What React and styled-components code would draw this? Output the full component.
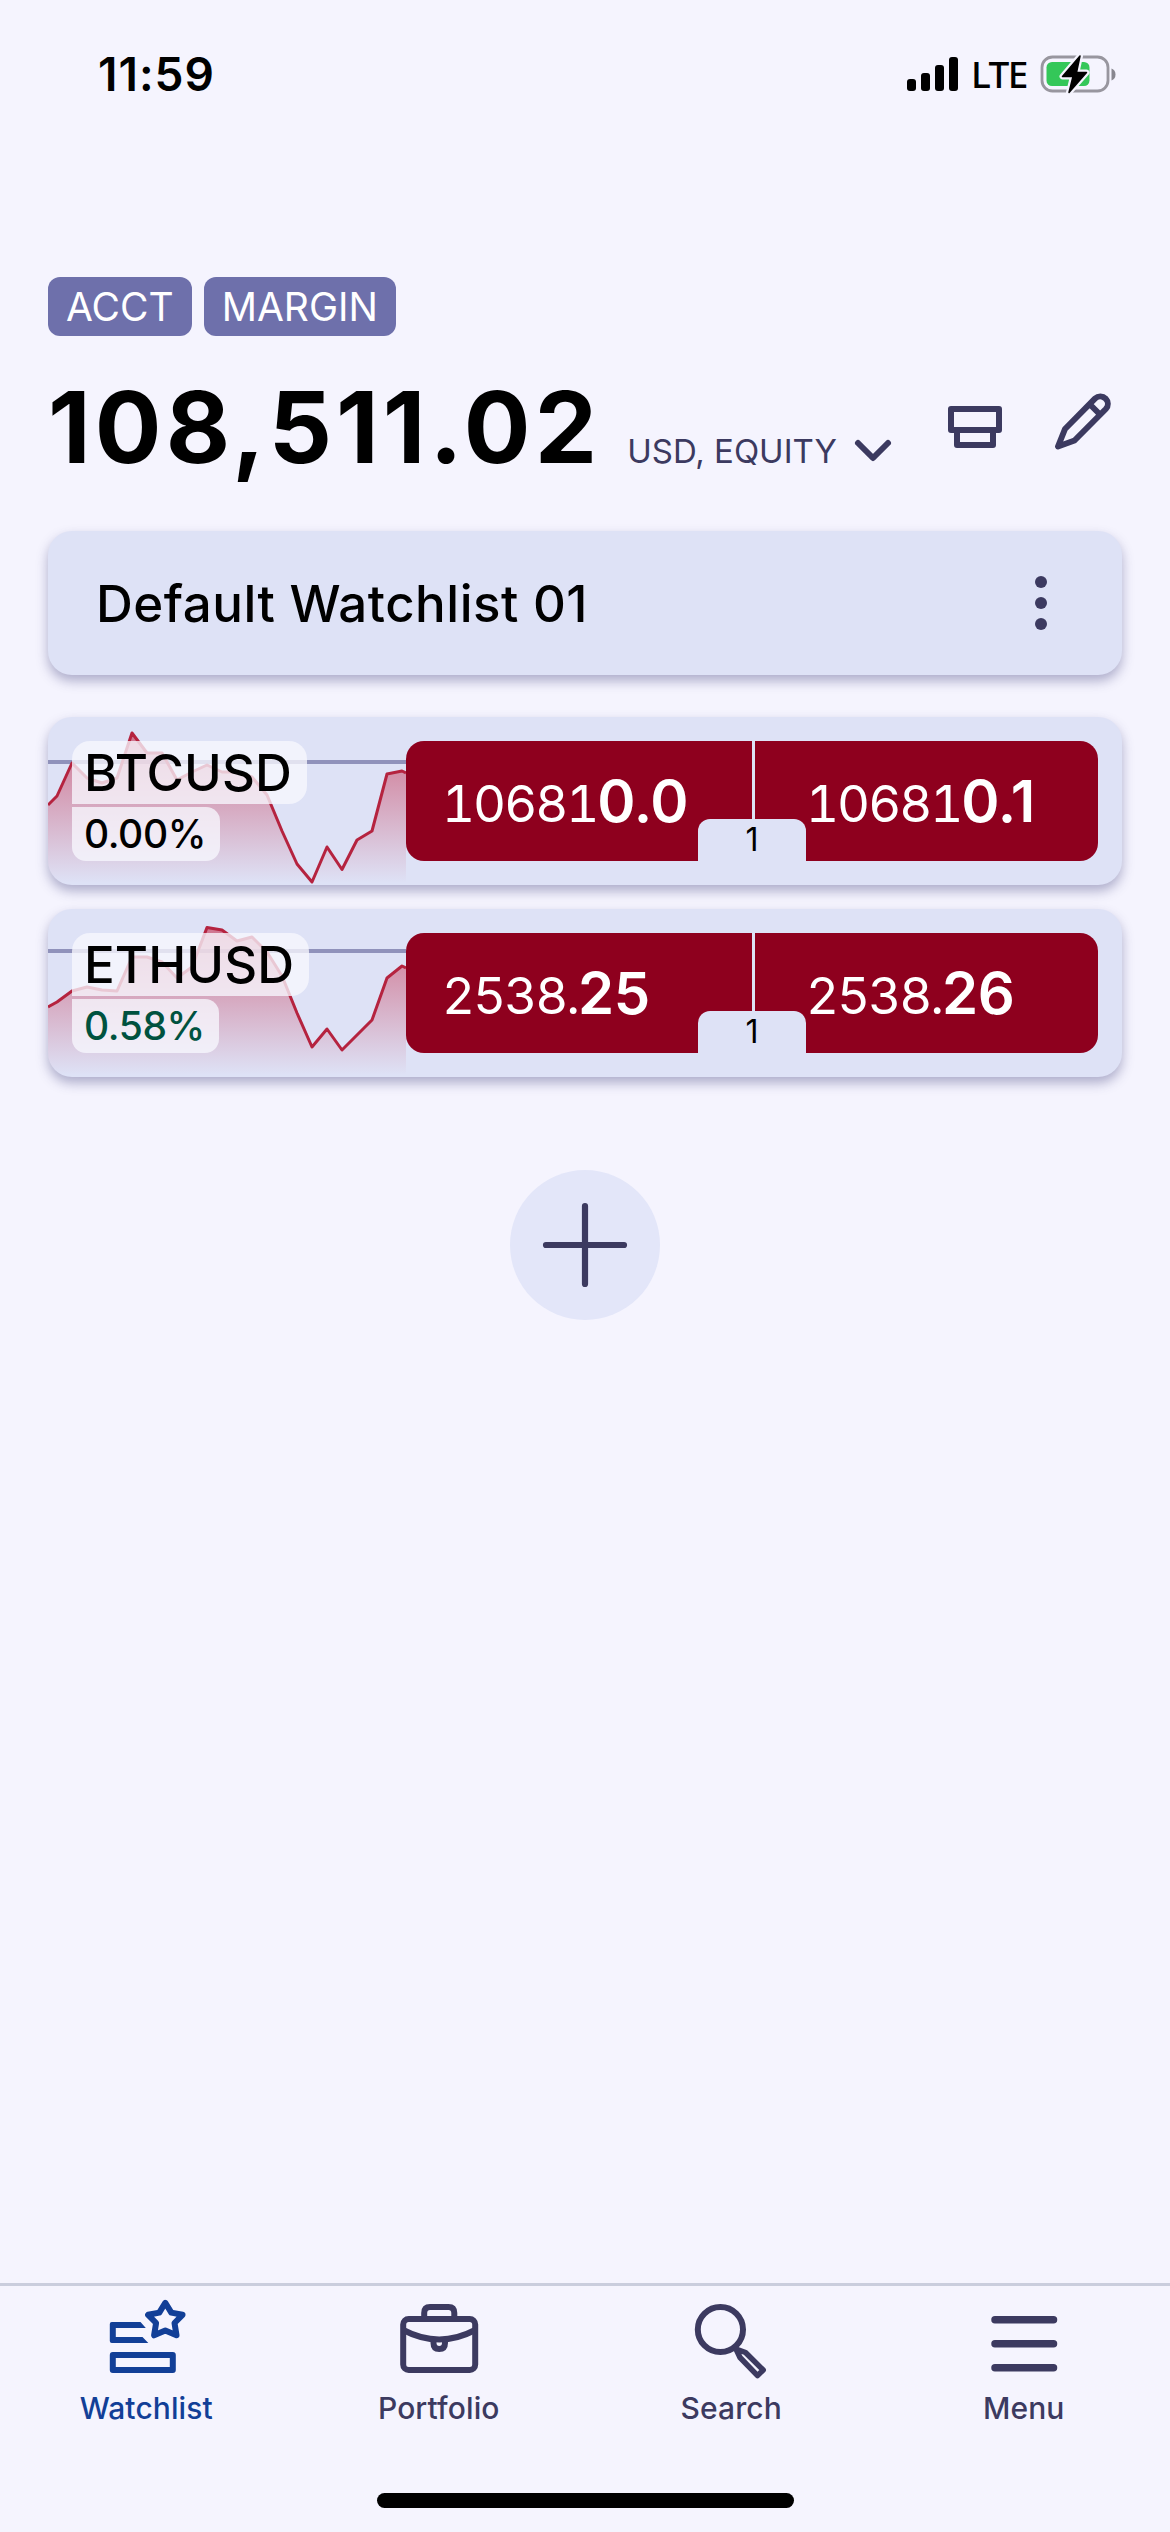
import React from "react";
import styled, { createGlobalStyle } from "styled-components";

const GlobalStyle = createGlobalStyle`
  * {
    box-sizing: border-box;
  }

  body {
    margin: 0;
    background-color: #f5f4fe;
    font-family: Inter, "Liberation Sans", sans-serif;
    color: #000;
  }
`;

const Screen = styled.div`
  display: flex;
  flex-direction: column;
  width: 1170px;
  height: 2532px;
  overflow: hidden;
`;

const StatusBar = styled.header`
  display: flex;
  align-items: center;
  justify-content: space-between;
  height: 148px;
  padding: 0 52px 0 98px;
`;

const Time = styled.span`
  font-size: 46px;
  font-weight: 600;
  letter-spacing: 1px;
  line-height: 60px;
`;

const StatusIcons = styled.div`
  display: flex;
  align-items: center;
`;

const Network = styled.span`
  width: 82px;
  font-family: "Noto Sans", "Open Sans", sans-serif;
  font-size: 37px;
  font-weight: 500;
  letter-spacing: -1.5px;
  line-height: 40px;
  text-align: center;
`;

const Content = styled.main`
  flex: 1;
  display: flex;
  flex-direction: column;
  padding: 129px 48px 0;
`;

const Tags = styled.div`
  display: flex;
  gap: 12px;
`;

const Tag = styled.span`
  height: 59px;
  padding: 0 18px;
  border-radius: 12px;
  background-color: #6e70ab;
  color: #fff;
  font-size: 39px;
  line-height: 59px;
`;

const AccountRow = styled.div`
  display: flex;
  align-items: center;
  justify-content: space-between;
  height: 120px;
  margin-top: 31px;
  padding-right: 3px;
`;

const Balance = styled.div`
  display: flex;
  align-items: baseline;
`;

const Amount = styled.span`
  font-size: 99px;
  font-weight: 700;
  letter-spacing: 4.1px;
  line-height: 120px;
`;

const Currency = styled.button`
  display: flex;
  align-items: center;
  gap: 16px;
  margin-left: 26px;
  padding: 0;
  border: none;
  background: none;
  color: #3c3a60;
  font-family: inherit;
  font-size: 33px;
  line-height: 40px;
`;

const Actions = styled.div`
  display: flex;
  gap: 36px;
`;

const Card = styled.section`
  display: flex;
  border-radius: 24px;
  background-color: #dee2f6;
  box-shadow: 0 6px 12px rgba(59, 57, 120, 0.38);
`;

const WatchlistHeader = styled(Card)`
  align-items: center;
  justify-content: space-between;
  height: 144px;
  margin-top: 44px;
  padding: 0 75px 0 48px;
`;

const WatchlistTitle = styled.h1`
  margin: 0;
  padding-top: 2px;
  font-size: 51px;
  font-weight: 500;
  letter-spacing: 0.5px;
  line-height: 60px;
`;

const Rows = styled.div`
  display: flex;
  flex-direction: column;
  gap: 24px;
  margin-top: 42px;
`;

const InstrumentCard = styled(Card)`
  position: relative;
  justify-content: space-between;
  height: 168px;
  padding: 24px;
  overflow: hidden;
`;

/* sits behind the symbol and change labels */
const Chart = styled.svg`
  position: absolute;
  top: 0;
  left: 0;
`;

const Labels = styled.div`
  position: relative;
  display: flex;
  flex-direction: column;
  align-items: flex-start;
  gap: 3px;
`;

const Label = styled.span`
  background-color: rgba(247, 247, 254, 0.78);
`;

const SymbolName = styled(Label)`
  height: 63px;
  padding: 0 15px 0 12px;
  border-radius: 18px 18px 18px 0;
  font-size: 51px;
  font-weight: 500;
  letter-spacing: 0.1px;
  line-height: 63px;
`;

const Change = styled(Label)`
  height: 54px;
  padding: 0 14px 0 12px;
  border-radius: 0 14px 14px 14px;
  color: ${(props) => (props.$up ? "#00523f" : "#000")};
  font-size: 39px;
  font-weight: 500;
  letter-spacing: -0.4px;
  line-height: 54px;
`;

const Quotes = styled.div`
  position: relative;
  display: grid;
  grid-template-columns: 346px 343px;
  gap: 3px;
  height: 120px;
  border-radius: 18px;
  overflow: hidden;
`;

const Price = styled.button`
  padding: 0 0 0 ${(props) => props.$indent}px;
  border: none;
  background-color: #8e001e;
  color: #fff;
  font-family: inherit;
  font-size: 51px;
  font-weight: 400;
  font-variant-numeric: tabular-nums;
  letter-spacing: -2px;
  line-height: 120px;
  text-align: left;
  white-space: nowrap;
`;

const Pips = styled.span`
  font-size: 58px;
  font-weight: 600;
  font-variant-numeric: normal;
  letter-spacing: -0.3px;
`;

const Spread = styled.span`
  position: absolute;
  left: 292px;
  bottom: 0;
  width: 108px;
  height: 42px;
  border-radius: 12px 12px 0 0;
  background-color: #dee2f6;
  font-size: 32px;
  line-height: 42px;
  text-align: center;
`;

const AddButton = styled.button`
  display: flex;
  align-items: center;
  justify-content: center;
  align-self: center;
  width: 150px;
  height: 150px;
  margin-top: 93px;
  padding: 0;
  border: none;
  border-radius: 50%;
  background-color: #e3e6f9;
`;

const TabBar = styled.nav`
  display: grid;
  grid-template-columns: repeat(4, 1fr);
  height: 210px;
  padding-top: 10px;
  border-top: 3px solid #cacddd;
`;

const Tab = styled.a`
  display: flex;
  flex-direction: column;
  align-items: center;
  gap: 10px;
  color: ${(props) => (props.$active ? "#123f97" : "#3c3a60")};
  font-size: 30px;
  font-weight: 500;
  letter-spacing: 0.1px;
  line-height: 36px;
`;

const HomeIndicator = styled.div`
  flex-shrink: 0;
  width: 417px;
  height: 15px;
  margin: 0 auto 24px;
  border-radius: 8px;
  background-color: #000;
`;

const SignalIcon = () => (
  <svg width="51" height="34" viewBox="0 0 51 34">
    <rect x="0" y="22" width="9" height="12" rx="3" />
    <rect x="14" y="16" width="9" height="18" rx="3" />
    <rect x="28" y="8" width="9" height="26" rx="3" />
    <rect x="42" y="0" width="9" height="34" rx="3" />
  </svg>
);

const BatteryIcon = () => (
  <svg width="78" height="40" viewBox="0 0 78 40">
    <rect x="2" y="3" width="66" height="34" rx="10.5" fill="none" stroke="#98969f" strokeWidth="2.8" />
    <rect x="6.5" y="8" width="43" height="24" rx="5.5" fill="#34c759" />
    <path d="M71.500 14.500q4 1.500 4 6t-4 6z" fill="#88868f" />
    <path
      d="M40 2L22.500 22.500H33L29 38.500L46.500 18.500H36.500z"
      stroke="#f5f4fe"
      strokeWidth="6"
      strokeLinejoin="round"
    />
    <path d="M40 2L22.500 22.500H33L29 38.500L46.500 18.500H36.500z" stroke="#000" strokeWidth="1.5" strokeLinejoin="round" />
  </svg>
);

const ChevronIcon = () => (
  <svg width="40" height="26" viewBox="0 0 40 26" fill="none" stroke="#3c3a60" strokeWidth="6" strokeLinecap="round" strokeLinejoin="round">
    <path d="M5 5L20 20L35 5" />
  </svg>
);

const LayoutIcon = () => (
  <svg width="72" height="72" viewBox="0 0 72 72" fill="none" stroke="#3c3a60" strokeWidth="6" strokeLinejoin="round">
    <path d="M12 18H60V39H12zM18 39H54V54H18z" />
  </svg>
);

const PencilIcon = () => (
  <svg width="72" height="72" viewBox="0 0 72 72" fill="none" stroke="#3c3a60" strokeWidth="6" strokeLinejoin="round">
    <path d="M11 55.500L18 38L48.200 7.400A7.500 7.500 0 0 1 58.800 18L27.500 49.500zM42.500 13L53 23.500" />
  </svg>
);

const MoreIcon = () => (
  <svg width="12" height="54" viewBox="0 0 12 54" fill="#3c3a60">
    <circle cx="6" cy="6" r="6" />
    <circle cx="6" cy="27" r="6" />
    <circle cx="6" cy="48" r="6" />
  </svg>
);

const PlusIcon = () => (
  <svg width="90" height="90" viewBox="0 0 90 90" stroke="#3c3a60" strokeWidth="6.2" strokeLinecap="round">
    <path d="M6 45H84M45 6V84" />
  </svg>
);

const TabIcon = ({ children }) => (
  <svg width="84" height="84" viewBox="0 0 84 84" fill="none" stroke="currentColor" strokeWidth="6" strokeLinejoin="round">
    {children}
  </svg>
);

const tabs = [
  {
    name: "Watchlist",
    active: true,
    icon: (
      <>
        <path
          d="M7.800 26H36.500L41.800 32H11.800V41H38.500L44.300 47H7.800Q5.800 47 5.800 45V28Q5.800 26 7.800 26Z"
          fill="currentColor"
          stroke="none"
        />
        <rect x="8.8" y="59" width="60" height="15" />
        <path d="M61.300 6.800L67.300 16.600L78.500 18.800L70.500 27L72.500 39.300L61.300 34.500L50.100 39.300L52.100 27L44.100 18.800L55.300 16.600Z" />
      </>
    ),
  },
  {
    name: "Portfolio",
    icon: (
      <>
        <rect x="6.2" y="23" width="72" height="51" rx="5.5" />
        <path d="M27.200 23V17Q27.200 11 33 11H51.500Q57.300 11 57.300 17V23" />
        <path d="M6.200 34Q42.200 53 78.200 34" />
        <path d="M36.500 44V47Q36.500 53 42.200 53Q48 53 48 47V44" />
      </>
    ),
  },
  {
    name: "Search",
    icon: (
      <>
        <circle cx="31.4" cy="33.5" r="22.6" />
        <path d="M47 53L56.500 56.500L74.200 74L68.500 79.600L51 61.500Z" strokeWidth="5.5" />
      </>
    ),
  },
  {
    name: "Menu",
    icon: <path d="M13 23.700H71.500M13 47.700H71.500M13 71.700H71.500" strokeWidth="7.5" strokeLinecap="round" />,
  },
];

const instruments = [
  {
    symbol: "BTCUSD",
    change: "0.00%",
    up: false,
    bid: ["10681", "0.0"],
    ask: ["10681", "0.1"],
    spread: "1",
    reference: 45,
    points:
      "0,88 9,79 24,46 39,61 54,66 69,61 84,16 99,36 114,36 129,63 144,55 159,48 174,55 189,55 204,60 219,78 234,114 249,147 264,165 279,130 294,152.5 309,123 324,114 339,57 354,54 358,56",
  },
  {
    symbol: "ETHUSD",
    change: "0.58%",
    up: true,
    bid: ["2538.", "25"],
    ask: ["2538.", "26"],
    spread: "1",
    reference: 42,
    points:
      "0,98 9,93 24,82 39,78 54,81 69,82 84,48 99,48 114,53 129,69 144,58 159,18.5 174,21 189,32 204,28 219,43 234,67 249,104 264,138 279,120 294,141 309,126 324,111 339,69 354,57 358,59",
  },
];

const Instrument = ({ symbol, change, up, bid, ask, spread, reference, points }) => (
  <InstrumentCard>
    <Chart width="358" height="168" viewBox="0 0 358 168">
      <defs>
        <linearGradient id={`fill-${symbol}`} gradientUnits="userSpaceOnUse" x1="0" y1="10" x2="0" y2="166">
          <stop offset="0" stopColor="#c4203f" stopOpacity="0.6" />
          <stop offset="1" stopColor="#c4203f" stopOpacity="0" />
        </linearGradient>
      </defs>
      <path d={`M0 ${reference}H358`} stroke="#9092bb" strokeWidth="4" />
      <polygon points={`0,168 ${points} 358,168`} fill={`url(#fill-${symbol})`} />
      <polyline points={points} fill="none" stroke="#b5233f" strokeWidth="3" strokeLinejoin="round" />
    </Chart>
    <Labels>
      <SymbolName>{symbol}</SymbolName>
      <Change $up={up}>{change}</Change>
    </Labels>
    <Quotes>
      <Price $indent={36}>
        {bid[0]}
        <Pips>{bid[1]}</Pips>
      </Price>
      <Price $indent={51}>
        {ask[0]}
        <Pips>{ask[1]}</Pips>
      </Price>
      <Spread>{spread}</Spread>
    </Quotes>
  </InstrumentCard>
);

const App = () => {
  return (
    <>
      <GlobalStyle />
      <Screen>
        <StatusBar>
          <Time>11:59</Time>
          <StatusIcons>
            <SignalIcon />
            <Network>LTE</Network>
            <BatteryIcon />
          </StatusIcons>
        </StatusBar>

        <Content>
          <Tags>
            <Tag>ACCT</Tag>
            <Tag>MARGIN</Tag>
          </Tags>

          <AccountRow>
            <Balance>
              <Amount>108,511.02</Amount>
              <Currency>
                USD, EQUITY
                <ChevronIcon />
              </Currency>
            </Balance>
            <Actions>
              <LayoutIcon />
              <PencilIcon />
            </Actions>
          </AccountRow>

          <WatchlistHeader>
            <WatchlistTitle>Default Watchlist 01</WatchlistTitle>
            <MoreIcon />
          </WatchlistHeader>

          <Rows>
            {instruments.map((item) => (
              <Instrument key={item.symbol} {...item} />
            ))}
          </Rows>

          <AddButton>
            <PlusIcon />
          </AddButton>
        </Content>

        <TabBar>
          {tabs.map((tab) => (
            <Tab key={tab.name} $active={tab.active}>
              <TabIcon>{tab.icon}</TabIcon>
              {tab.name}
            </Tab>
          ))}
        </TabBar>
        <HomeIndicator />
      </Screen>
    </>
  );
};

export default App;
